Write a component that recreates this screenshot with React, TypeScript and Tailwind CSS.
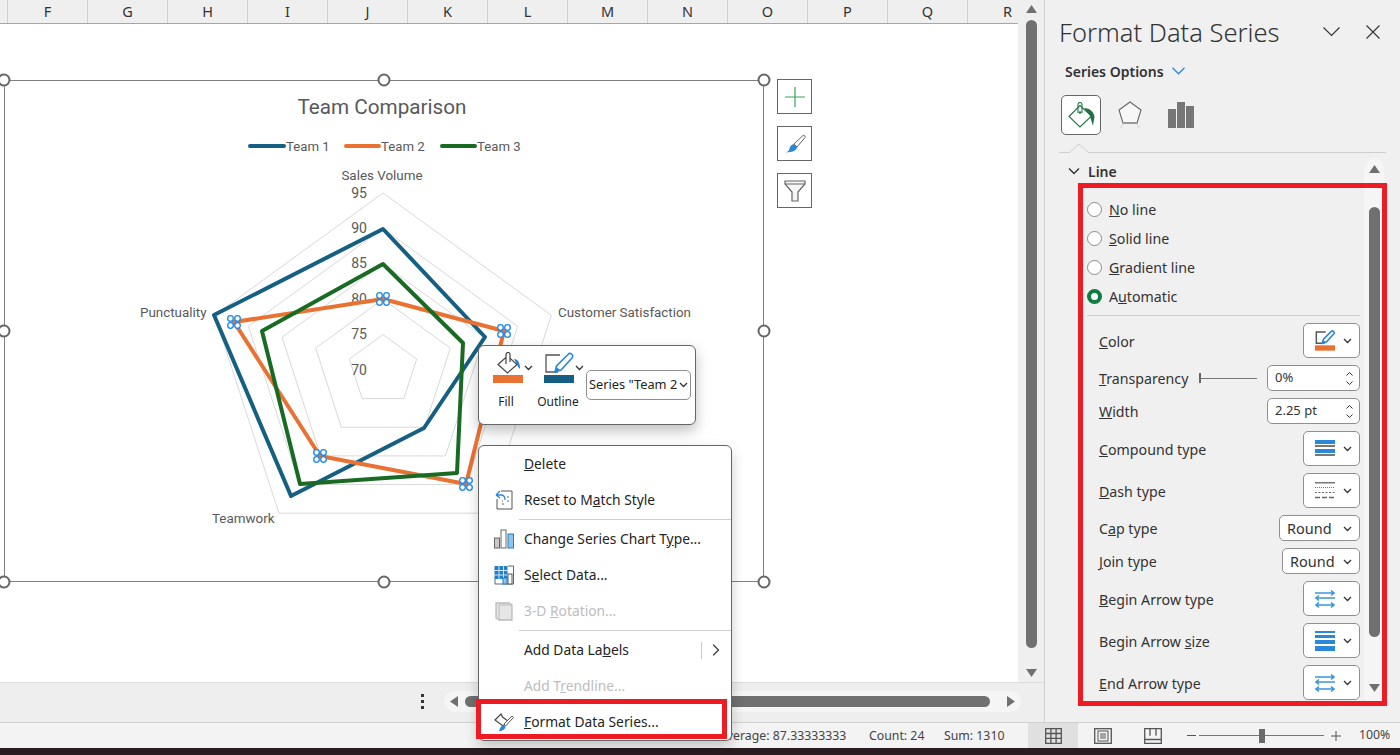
import React from "react";
import { ChevronRight } from "lucide-react";

const COLUMNS = ["F", "G", "H", "I", "J", "K", "L", "M", "N", "O", "P", "Q", "R"];
const CENTER = { x: 383, y: 370 };
const DIRS = [
  [0, -1],
  [0.951, -0.309],
  [0.588, 0.809],
  [-0.588, 0.809],
  [-0.951, -0.309],
];

const TEAM_1 = "383,229 485,337 424,428 291,496 214,315";
const TEAM_2 = "383,299 504,331 466,484 320,456 234,322";
const TEAM_3 = "383,264 463,343 457,473 300,484 262,331";
const ORANGE_POINTS = [
  [383, 299],
  [504, 331],
  [466, 484],
  [320, 456],
  [234, 322],
];
const HANDLES = [
  [4, 80],
  [384, 80],
  [764, 80],
  [4, 331],
  [764, 331],
  [4, 582],
  [384, 582],
  [764, 582],
];

function ChevronSmall() {
  return (
    <svg width="9" height="6" viewBox="0 0 9 6" className="shrink-0">
      <path d="M1 1l3.500 3.500L8 1" fill="none" stroke="#333" strokeWidth="1.300" />
    </svg>
  );
}

function BucketIcon() {
  return (
    <svg width="30" height="32" viewBox="0 0 30 32" className="block">
      <path d="M5 12.500L14.500 4 24 12.500 14.500 21z" fill="#fff" stroke="#444" strokeWidth="1.200" />
      <path d="M13 12V2.500a2 2 0 0 1 4 0V10" fill="#fff" stroke="#444" strokeWidth="1.200" />
      <path d="M21 7c4 0 6 4 6 10-1-1-3-3-3-5z" fill="#1f7fc9" />
      <rect x="0" y="23" width="30" height="8" fill="#e97132" />
    </svg>
  );
}

function PencilIcon({ bar, w = 30 }: { bar: string; w?: number }) {
  const small = w < 30;
  return (
    <svg width={w} height={(w * 32) / 30} viewBox="0 0 30 32" className="block">
      <path d="M14 20H2V3h14" fill="none" stroke="#555" strokeWidth={small ? 2.200 : 1.300} />
      <path d="M11 20l1.500-6L24 2.500a2 2 0 0 1 4 3.500L17 18z" fill="#fff" stroke="#2b88d8" strokeWidth={small ? 2.400 : 1.600} />
      <path d="M11 20l1.500-5 3.500 3z" fill="#2b88d8" />
      <rect x="0" y="23" width="30" height="8" fill={bar} />
    </svg>
  );
}

function ArrowsIcon() {
  return (
    <svg width="20" height="20" viewBox="0 0 20 20" className="block">
      <g fill="none" stroke="#3a96dd" strokeWidth="1.600">
        <path d="M0 4h19M16 1.500L19 4l-3 2.500" />
        <path d="M20 9H1M4 6.500L1 9l3 2.500" />
        <path d="M1 16h18M4 13.500L1 16l3 2.500M16 13.500l3 2.500-3 2.500" />
      </g>
    </svg>
  );
}

function CompoundIcon() {
  return (
    <svg width="20" height="17" viewBox="0 0 20 17" className="block">
      <rect y="0" width="20" height="4" fill="#2b88d8" />
      <rect y="5" width="20" height="2" fill="#777" />
      <rect y="9" width="20" height="4" fill="#2b88d8" />
      <rect y="14" width="20" height="2" fill="#777" />
    </svg>
  );
}

function DashIcon() {
  return (
    <svg width="20" height="18" viewBox="0 0 20 18" className="block">
      <rect y="0" width="20" height="1.500" fill="#777" />
      <path d="M0 5.500h20" stroke="#777" strokeDasharray="1 1" />
      <path d="M0 10.500h20" stroke="#666" strokeDasharray="2 1.500" />
      <path d="M0 15.500h20" stroke="#666" strokeWidth="1.300" strokeDasharray="5 2" />
    </svg>
  );
}

function SizeIcon() {
  return (
    <svg width="20" height="20" viewBox="0 0 20 20" className="block">
      <rect y="0" width="20" height="2" fill="#2b88d8" />
      <rect y="4" width="20" height="3" fill="#2b88d8" />
      <rect y="9" width="20" height="4" fill="#2b88d8" />
      <rect y="15" width="20" height="5" fill="#2b88d8" />
    </svg>
  );
}

function FormatRow({ label, h, w, children }: { label: React.ReactNode; h: string; w: string; children: React.ReactNode }) {
  return (
    <div className={`flex items-center justify-between ${h}`}>
      <span className="pt-[2px] text-[14.200px] text-[#333]">{label}</span>
      <div className={`flex h-full items-center justify-between rounded-[5px] border border-[#8f8f8f] bg-white ${w}`}>{children}</div>
    </div>
  );
}

function IconRow({ label, children }: { label: React.ReactNode; children: React.ReactNode }) {
  return (
    <FormatRow label={label} h="h-[35px]" w="w-[57px] pl-[11px] pr-[7px]">
      {children}
      <ChevronSmall />
    </FormatRow>
  );
}

function Spin({ label, value, extra }: { label: React.ReactNode; value: string; extra?: React.ReactNode }) {
  return (
    <div className="flex h-[26px] items-center">
      <span className="w-[100px] pt-[2px] text-[14.200px] text-[#333]">{label}</span>
      <div className="w-[68px] shrink-0">{extra}</div>
      <div className="flex h-full w-[93px] items-center justify-between rounded-[5px] border border-[#8f8f8f] bg-white pl-[7px] pr-[6px] text-[13px] text-[#333]">
        {value}
        <div className="flex flex-col gap-[5px]">
          <svg width="7" height="4" viewBox="0 0 7 4"><path d="M.5 3.500l3-3 3 3" fill="none" stroke="#333" /></svg>
          <svg width="7" height="4" viewBox="0 0 7 4"><path d="M.5.500l3 3 3-3" fill="none" stroke="#333" /></svg>
        </div>
      </div>
    </div>
  );
}

function Radio({ label, on }: { label: React.ReactNode; on?: boolean }) {
  return (
    <div className="flex h-[29px] items-center gap-[7px]">
      <span className={on ? "h-[15px] w-[15px] rounded-full border-[4px] border-[#107c41] bg-white" : "h-[15px] w-[15px] rounded-full border border-[#8a8a8a] bg-white"} />
      <span className="text-[14.200px] text-[#333]">{label}</span>
    </div>
  );
}

function FormatPane() {
  return (
    <div className="flex h-full w-[356px] flex-col border-l border-[#cfcfcf] bg-[#f0f0f0]">
      <div className="flex h-[62px] items-center pl-[14px] pr-[20px] pt-[2px]">
        <span className="flex-1 text-[25.500px] font-light text-[#333]">Format Data Series</span>
        <svg width="17" height="10" viewBox="0 0 17 10" className="mr-[26px]">
          <path d="M.5.500l8 8 8-8" fill="none" stroke="#333" strokeWidth="1.100" />
        </svg>
        <svg width="14" height="14" viewBox="0 0 14 14">
          <path d="M.5.500l13 13M13.500.500l-13 13" fill="none" stroke="#333" strokeWidth="1.100" />
        </svg>
      </div>
      <div className="flex h-[20px] items-center gap-[8px] pb-[2px] pl-[20px] text-[14px] font-semibold text-[#333]">
        Series Options
        <svg width="13" height="8" viewBox="0 0 13 8">
          <path d="M.5.800l6 6 6-6" fill="none" stroke="#2b88d8" strokeWidth="1.300" />
        </svg>
      </div>
      <div className="mt-[13px] flex h-[40px] items-center pl-[16px]">
        <div className="flex h-[40px] w-[40px] items-center justify-center rounded-[5px] border border-[#666] bg-white">
          <svg width="27" height="26" viewBox="0 0 27 26">
            <path d="M1 14.500L12 3.500 23.500 14 12 25z" fill="none" stroke="#217346" strokeWidth="1.100" />
            <path d="M10 11V2.500a2 2 0 0 1 4 0V11" fill="none" stroke="#217346" strokeWidth="1.100" />
            <circle cx="12" cy="10.500" r="1.300" fill="#217346" />
            <path d="M16 6c6 0 10 4 10.500 9-.5 3-1 5-1.500 9-1-3-2-7-3.500-11z" fill="#217346" />
          </svg>
        </div>
        <svg width="24" height="28" viewBox="0 0 24 28" className="ml-[17px]">
          <path d="M12 1l11 8-4 13H5L1 9z" fill="#f7f7f7" stroke="#666" strokeWidth="1.100" />
          <path d="M5 22h14" stroke="#999" strokeWidth="2" />
          <path d="M5 23l-2 4M19 23l2 4" stroke="#ddd" strokeWidth="1.500" />
        </svg>
        <svg width="26" height="26" viewBox="0 0 26 26" className="ml-[26px]">
          <rect x="0" y="7" width="8" height="19" fill="#767676" />
          <rect x="9" y="0" width="8" height="26" fill="#767676" />
          <rect x="18" y="4" width="8" height="22" fill="#767676" />
        </svg>
      </div>
      <div className="relative ml-[14px] mr-[14px] mt-[17px] h-px bg-[#cfcfcf]">
        <svg width="20" height="10" viewBox="0 0 20 10" className="absolute left-[10px] top-[-9px]">
          <path d="M0 10l10-9 10 9" fill="#f0f0f0" stroke="#cfcfcf" />
        </svg>
      </div>
      <div className="ml-[14px] mt-[5px] flex h-[547px]">
        <div className="w-[305px] shrink-0">
          <div className="flex h-[18px] items-center gap-[8px] pl-[9px] pt-[8px] text-[14px] font-semibold text-[#333]">
            <svg width="12" height="8" viewBox="0 0 12 8"><path d="M1 1.500l5 5 5-5" fill="none" stroke="#333" strokeWidth="1.400" /></svg>
            Line
          </div>
          <div className="pl-[28px] pt-[19px]">
            <Radio label={<><u>N</u>o line</>} />
            <Radio label={<><u>S</u>olid line</>} />
            <Radio label={<><u>G</u>radient line</>} />
            <Radio on label={<>A<u>u</u>tomatic</>} />
            <div className="mt-[4px] h-px w-[273px] bg-[#cfcfcf]" />
            <div className="mt-[7px] flex w-[273px] flex-col gap-[7px] pl-[12px]">
              <IconRow label={<><u>C</u>olor</>}><PencilIcon bar="#e97132" w={20} /></IconRow>
              <Spin
                label={<><u>T</u>ransparency</>}
                value="0%"
                extra={
                  <div className="flex h-[10px] w-[58px] items-center">
                    <span className="h-[10px] w-[2px] bg-[#666]" />
                    <span className="h-px flex-1 bg-[#777]" />
                  </div>
                }
              />
              <Spin label={<><u>W</u>idth</>} value="2.25 pt" />
              <IconRow label={<><u>C</u>ompound type</>}><CompoundIcon /></IconRow>
              <IconRow label={<><u>D</u>ash type</>}><DashIcon /></IconRow>
              <FormatRow label={<>C<u>a</u>p type</>} h="h-[26px]" w="w-[81px] pl-[7px] pr-[7px] pt-px text-[14.500px] text-[#333]">
                Round
                <ChevronSmall />
              </FormatRow>
              <FormatRow label={<><u>J</u>oin type</>} h="h-[26px]" w="w-[78px] pl-[7px] pr-[7px] pt-px text-[14.500px] text-[#333]">
                Round
                <ChevronSmall />
              </FormatRow>
              <IconRow label={<><u>B</u>egin Arrow type</>}><ArrowsIcon /></IconRow>
              <IconRow label={<>Begin Arrow <u>s</u>ize</>}><SizeIcon /></IconRow>
              <IconRow label={<><u>E</u>nd Arrow type</>}><ArrowsIcon /></IconRow>
            </div>
          </div>
        </div>
        <div className="flex w-[20px] flex-col items-center rounded-full bg-[#f5f5f5]">
          <svg width="11" height="8" viewBox="0 0 11 8" className="mt-[7px]"><path d="M5.500 0L11 8H0z" fill="#707070" /></svg>
          <div className="mt-[34px] h-[430px] w-[11px] rounded-full bg-[#707070]" />
          <svg width="11" height="8" viewBox="0 0 11 8" className="mt-[47px]"><path d="M5.500 8L11 0H0z" fill="#707070" /></svg>
        </div>
      </div>
    </div>
  );
}

function ChartCanvas() {
  const text = "font-['Roboto',sans-serif] fill-[#595959]";
  return (
    <svg viewBox="4 80 760 502" className="absolute left-[-1px] top-[-1px] h-[502px] w-[760px] overflow-visible">
      {[1, 2, 3, 4, 5].map((n) => (
        <polygon
          key={n}
          points={DIRS.map((d) => `${CENTER.x + d[0] * n * 35.4},${CENTER.y + d[1] * n * 35.4}`).join(" ")}
          fill="none"
          stroke="#d9d9d9"
        />
      ))}
      <text x="382" y="107" textAnchor="middle" dominantBaseline="central" className={`${text} text-[20.700px]`}>Team Comparison</text>

      <line x1="250" x2="284" y1="146" y2="146" stroke="#156082" strokeWidth="4" strokeLinecap="round" />
      <text x="286" y="146" dominantBaseline="central" className={`${text} text-[13.200px]`}>Team 1</text>
      <line x1="346" x2="379" y1="146" y2="146" stroke="#e97132" strokeWidth="4" strokeLinecap="round" />
      <text x="381" y="146" dominantBaseline="central" className={`${text} text-[13.200px]`}>Team 2</text>
      <line x1="442" x2="475" y1="146" y2="146" stroke="#196b24" strokeWidth="4" strokeLinecap="round" />
      <text x="477" y="146" dominantBaseline="central" className={`${text} text-[13.200px]`}>Team 3</text>

      <text x="382" y="175" textAnchor="middle" dominantBaseline="central" className={`${text} text-[13.400px]`}>Sales Volume</text>
      <text x="558" y="312" dominantBaseline="central" className={`${text} text-[13.400px]`}>Customer Satisfaction</text>
      <text x="140" y="312" dominantBaseline="central" className={`${text} text-[13.400px]`}>Punctuality</text>
      <text x="212" y="518" dominantBaseline="central" className={`${text} text-[13.400px]`}>Teamwork</text>

      {[95, 90, 85, 80, 75, 70].map((v, i) => (
        <text key={v} x="367" y={192.5 + i * 35.4} textAnchor="end" dominantBaseline="central" className={`${text} text-[14px]`}>
          {v}
        </text>
      ))}

      <polygon points={TEAM_1} fill="none" stroke="#156082" strokeWidth="4" strokeLinejoin="round" />
      <polygon points={TEAM_2} fill="none" stroke="#e97132" strokeWidth="4" strokeLinejoin="round" />
      <polygon points={TEAM_3} fill="none" stroke="#196b24" strokeWidth="4" strokeLinejoin="round" />

      {ORANGE_POINTS.map(([x, y]) => (
        <g key={x} fill="#fff" stroke="#1e88e5" strokeWidth="1.300">
          <circle cx={x - 3.500} cy={y - 3.500} r="2.800" />
          <circle cx={x + 3.500} cy={y - 3.500} r="2.800" />
          <circle cx={x - 3.500} cy={y + 3.500} r="2.800" />
          <circle cx={x + 3.500} cy={y + 3.500} r="2.800" />
        </g>
      ))}

      {HANDLES.map(([x, y]) => (
        <circle key={`${x}-${y}`} cx={x} cy={y} r="5.500" fill="#fff" stroke="#666" strokeWidth="2" />
      ))}
    </svg>
  );
}

function ChartTools() {
  const box = "flex h-[35px] w-[35px] items-center justify-center border border-[#666] bg-white";
  return (
    <div className="absolute left-[777px] top-[55px] flex flex-col gap-[12px]">
      <div className={box}>
        <svg width="20" height="20" viewBox="0 0 20 20"><path d="M10 0v20M0 10h20" stroke="#3da35a" strokeWidth="1.200" /></svg>
      </div>
      <div className={box}>
        <svg width="22" height="20" viewBox="0 0 22 20">
          <path d="M10 10L19 1.500a1.500 1.500 0 0 1 2 2L13 13z" fill="#fff" stroke="#666" />
          <path d="M1 18c4 0 4-2 5-5 1-2 3-3 4-3l3 3c0 3-4 6-12 5z" fill="#2b88d8" />
        </svg>
      </div>
      <div className={box}>
        <svg width="22" height="24" viewBox="0 0 22 24">
          <path d="M1 2h20v3l-7 8v9H8v-9L1 5z" fill="#f5f5f5" stroke="#666" strokeWidth="1.200" />
          <path d="M1 5h20" stroke="#666" />
        </svg>
      </div>
    </div>
  );
}

function MiniToolbar() {
  return (
    <div className="absolute left-[478px] top-[345px] z-10 flex h-[80px] w-[218px] rounded-[6px] border border-[#666] bg-white pl-[14px] shadow-[0_6px_14px_rgba(0,0,0,0.25)]">
      <div className="flex w-[51px] flex-col pt-[6px]">
        <div className="flex items-center gap-[1px]">
          <BucketIcon />
          <ChevronSmall />
        </div>
        <span className="mt-[9px] ml-[-2px] w-[30px] text-center text-[12px] text-[#242424]">Fill</span>
      </div>
      <div className="flex w-[42px] flex-col pt-[6px]">
        <div className="flex items-center gap-[1px]">
          <PencilIcon bar="#156082" />
          <ChevronSmall />
        </div>
        <span className="mt-[9px] ml-[-7px] w-[42px] text-center text-[12px] text-[#242424]">Outline</span>
      </div>
      <div className="mt-[24px] flex h-[30px] w-[105px] items-center justify-between rounded-[5px] border border-[#8f8f8f] pl-[2px] pr-[2px]">
        <span className="overflow-hidden whitespace-nowrap text-[12.800px] text-[#242424]">Series "Team 2</span>
        <ChevronSmall />
      </div>
    </div>
  );
}

function MenuItem({ label, icon, disabled, children }: { label: React.ReactNode; icon?: React.ReactNode; disabled?: boolean; children?: React.ReactNode }) {
  return (
    <div className="flex h-[36px] items-center">
      <div className="flex w-[45px] shrink-0 justify-center pl-[5px]">{icon}</div>
      <span className={disabled ? "flex-1 text-[13.800px] text-[#bdbdbd]" : "flex-1 text-[13.800px] text-[#242424]"}>{label}</span>
      {children}
    </div>
  );
}

function ContextMenu() {
  return (
    <div className="absolute left-[478px] top-[445px] z-10 h-[296px] w-[254px] rounded-[6px] border border-[#666] bg-white shadow-[0_6px_14px_rgba(0,0,0,0.2)]">
      <MenuItem label={<><u>D</u>elete</>} />
      <MenuItem
        label={<>Reset to M<u>a</u>tch Style</>}
        icon={
          <svg width="18" height="20" viewBox="0 0 18 20">
            <path d="M6 1h11v18H2V9" fill="none" stroke="#555" />
            <path d="M1 5l4-4M1 5l4 3M1 5h5c3 0 4 2 4 5" fill="none" stroke="#2b88d8" strokeWidth="1.300" />
            <path d="M7 14h2M7 11h1M12 7h2M12 11h2" stroke="#666" />
          </svg>
        }
      />
      <div className="ml-[40px] my-px h-px bg-[#d0d0d0]" />
      <MenuItem
        label={<>Change Series Chart T<u>y</u>pe...</>}
        icon={
          <svg width="20" height="20" viewBox="0 0 20 20">
            <rect x="0.500" y="9" width="5" height="10" fill="#c8c8c8" stroke="#666" />
            <rect x="7" y="1" width="5" height="18" fill="#fff" stroke="#666" />
            <rect x="14" y="5" width="5.500" height="14" fill="#8fc3ea" stroke="#1f7fc9" />
          </svg>
        }
      />
      <MenuItem
        label={<>S<u>e</u>lect Data...</>}
        icon={
          <svg width="20" height="20" viewBox="0 0 20 20">
            <rect x="0.500" y="1" width="13" height="13" fill="#1f7fc9" />
            <path d="M5 1v13M9.500 1v13M0 5.500h14M0 10h14" stroke="#cfe4f5" />
            <path d="M14 1h5.500v18H1v-5" fill="none" stroke="#666" />
            <rect x="9" y="13" width="4" height="6" fill="#8fc3ea" stroke="#1f7fc9" />
            <rect x="14" y="9" width="4" height="10" fill="#fff" stroke="#555" />
          </svg>
        }
      />
      <MenuItem
        disabled
        label={<>3-D <u>R</u>otation...</>}
        icon={
          <svg width="18" height="20" viewBox="0 0 18 20">
            <path d="M1 2h13l3 2v15H4l-3-2z" fill="#e6e6e6" stroke="#bbb" strokeWidth="1.300" />
            <path d="M4 4h13M4 4v15" stroke="#bbb" />
          </svg>
        }
      />
      <div className="ml-[40px] my-px h-px bg-[#d0d0d0]" />
      <MenuItem label={<>Add Data La<u>b</u>els</>}>
        <div className="flex items-center">
          <span className="h-[17px] w-px bg-[#ccc]" />
          <ChevronRight size={20} strokeWidth={1.300} className="ml-[4px] mr-[5px] text-[#333]" />
        </div>
      </MenuItem>
      <MenuItem disabled label={<>Add T<u>r</u>endline...</>} />
      <MenuItem
        label={<><u>F</u>ormat Data Series...</>}
        icon={
          <svg width="21" height="20" viewBox="0 0 21 20">
            <path d="M1 8l6-6 1.500 3L14 9l-5 5z" fill="#fff" stroke="#444" strokeWidth="1.200" />
            <path d="M10 12l8-8 1.500 1.500-8 8.500z" fill="#fff" stroke="#555" />
            <path d="M5 19c1-4 3-6 5-6l1.500 1.500c0 2.500-3 4.500-6.500 4.500z" fill="#2b88d8" />
          </svg>
        }
      />
    </div>
  );
}

function SheetBars() {
  return (
    <div className="flex h-[40px] items-center border-t border-[#dcdcdc] bg-[#eeeeee] pb-[3px] pl-[421px]">
      <div className="flex flex-col gap-[3px]">
        <span className="h-[3px] w-[3px] bg-[#333]" />
        <span className="h-[3px] w-[3px] bg-[#333]" />
        <span className="h-[3px] w-[3px] bg-[#333]" />
      </div>
      <div className="ml-[20px] flex h-[21px] w-[577px] items-center rounded-full bg-[#f5f5f5] pl-[6px]">
        <svg width="8" height="11" viewBox="0 0 8 11"><path d="M0 5.500L8 0v11z" fill="#707070" /></svg>
        <div className="ml-[7px] h-[11px] w-[525px] rounded-full bg-[#707070]" />
        <svg width="8" height="11" viewBox="0 0 8 11" className="ml-[17px]"><path d="M8 5.500L0 0v11z" fill="#707070" /></svg>
      </div>
    </div>
  );
}

function StatusBar() {
  return (
    <div className="flex h-[26px] items-center border-t border-[#cfcfcf] bg-[#f3f3f3] text-[12.300px] text-[#444]">
      <div className="ml-[719px] w-[150px] whitespace-nowrap pt-px">Average: 87.33333333</div>
      <div className="w-[75px] pt-px">Count: 24</div>
      <div className="w-[84px] pt-px">Sum: 1310</div>
      <div className="flex h-full w-[50px] items-center justify-center bg-[#e0e0e0]">
        <svg width="17" height="16" viewBox="0 0 17 16">
          <path d="M.700.700h15.600v14.600H.700zM.700 5.500h15.600M.700 10.300h15.600M5.900.700v14.600M11.100.700v14.600" fill="none" stroke="#555" strokeWidth="1.300" />
        </svg>
      </div>
      <div className="flex w-[50px] justify-center">
        <svg width="18" height="16" viewBox="0 0 18 16">
          <rect x="0.700" y="0.700" width="16.600" height="14.600" fill="none" stroke="#555" strokeWidth="1.300" />
          <rect x="4" y="3" width="10" height="10" fill="none" stroke="#555" />
          <path d="M6 6h6M6 8h6M6 10h6" stroke="#555" />
        </svg>
      </div>
      <div className="flex w-[50px] justify-center">
        <svg width="18" height="16" viewBox="0 0 18 16">
          <path d="M.700 15.300V.700h16.600v14.600zM.700 11.500h16.600M6 .700v7M12 .700v7" fill="none" stroke="#555" strokeWidth="1.300" />
        </svg>
      </div>
      <span className="ml-[9px] h-px w-[9px] bg-[#555]" />
      <div className="relative ml-[3px] flex h-[14px] w-[125px] items-center">
        <span className="h-px w-full bg-[#777]" />
        <span className="absolute left-[60px] h-[14px] w-[6px] bg-[#6b6b6b]" />
      </div>
      <svg width="10" height="10" viewBox="0 0 10 10" className="ml-[7px]"><path d="M5 0v10M0 5h10" stroke="#555" /></svg>
      <span className="ml-[18px]">100%</span>
    </div>
  );
}

export default function App() {
  return (
    <div className="relative flex h-[755px] w-[1400px] flex-col overflow-hidden font-['Noto_Sans',sans-serif]">
      <div className="flex h-[722px]">
        <div className="flex w-[1044px] shrink-0 flex-col">
          <div className="flex min-h-0 flex-1">
            <div className="flex w-[1018px] shrink-0 flex-col">
              <div className="flex h-[24px] shrink-0 overflow-hidden border-b border-[#a6a6a6] bg-[#efefef] pl-[7px]">
                {COLUMNS.map((c) => (
                  <div key={c} className="flex w-[80px] shrink-0 items-center justify-center border-l border-[#cfcfcf] text-[14.500px] text-[#333]">
                    {c}
                  </div>
                ))}
              </div>
              <div className="relative flex-1 bg-white pl-[4px] pt-[56px]">
                <div className="relative h-[502px] w-[760px] border border-[#808080]">
                  <ChartCanvas />
                </div>
                <ChartTools />
              </div>
            </div>
            <div className="flex w-[26px] flex-col items-center bg-[#efefef] pb-[2px]">
              <svg width="11" height="8" viewBox="0 0 11 8" className="mt-[5px]"><path d="M5.500 0L11 8H0z" fill="#707070" /></svg>
              <div className="mt-[7px] h-[628px] w-[11px] rounded-full bg-[#707070]" />
              <svg width="11" height="8" viewBox="0 0 11 8" className="mt-[21px]"><path d="M5.500 8L11 0H0z" fill="#707070" /></svg>
            </div>
          </div>
          <SheetBars />
        </div>
        <FormatPane />
      </div>
      <StatusBar />
      <div className="h-[7px] bg-[#2a1c20]" />

      <MiniToolbar />
      <ContextMenu />
      <div className="absolute left-[476px] top-[699px] z-20 h-[40px] w-[251px] border-[5px] border-[#ed1c24]" />
      <div className="absolute left-[1078px] top-[183px] z-20 h-[523px] w-[309px] border-[5px] border-[#ed1c24]" />
    </div>
  );
}
